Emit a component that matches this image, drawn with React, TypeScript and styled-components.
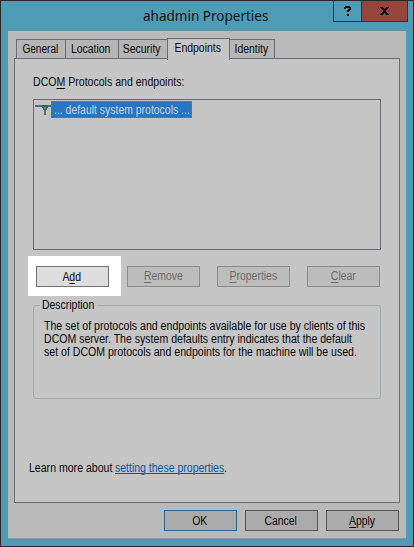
import React from "react";
import styled, { createGlobalStyle } from "styled-components";

const Global = createGlobalStyle`
  *, *::before, *::after { box-sizing: border-box; }
  body { margin: 0; overflow: hidden; background: #4e9bb5; }
`;

const Dialog = styled.main`
  width: 414px;
  height: 547px;
  display: flex;
  flex-direction: column;
  padding: 0 7px 7px;
  background: #4e9bb5;
  border: 1px solid #28282b;
  color: #080808;
  font: 12px/13px "Liberation Sans", Arial, sans-serif;
`;

const TitleBar = styled.header`
  height: 29px;
  flex: none;
  display: grid;
  grid-template-columns: 325px 75px;
  align-items: start;
  margin-right: -3px;
`;

const Title = styled.h1`
  width: max-content;
  margin: 5px 0 0 135px;
  font: 400 14px/20px "Noto Sans", "Open Sans", sans-serif;
  transform: scaleX(0.965);
  transform-origin: left;
  white-space: nowrap;
  color: #0b1418;
`;

const Controls = styled.div`
  display: flex;
  height: 21px;
`;

const Control = styled.button<{ $close?: boolean }>`
  width: ${(p) => (p.$close ? 47 : 28)}px;
  padding: 0;
  display: grid;
  place-items: center;
  background: ${(p) => (p.$close ? "#97463e" : "#4e9bb5")};
  border: solid ${(p) => (p.$close ? "#4b2927" : "#1f3942")};
  border-width: 0 ${(p) => (p.$close ? 1 : 0)}px 1px 1px;
`;

const Client = styled.section`
  flex: 1;
  display: flex;
  flex-direction: column;
  width: 398px;
  padding: 7px 6px 0;
  background: #b9b9b9;
  border-top: 1px solid #6c8e9a;
  border-bottom: 1px solid #8a9ca2;
`;

const Tabs = styled.nav`
  display: flex;
  align-items: flex-end;
  height: 20px;
  padding-left: 2px;
  flex: none;
`;

const Tab = styled.button<{ $w: number; $active?: boolean }>`
  position: relative;
  z-index: ${(p) => (p.$active ? 2 : 0)};
  width: ${(p) => p.$w}px;
  height: ${(p) => (p.$active ? 22 : 19)}px;
  margin: 0 -1px ${(p) => (p.$active ? -2 : 0)}px 0;
  padding: ${(p) => (p.$active ? "0 2px 2px 0" : "1px 2px 0 0")};
  display: flex;
  justify-content: center;
  align-items: center;
  color: inherit;
  font: inherit;
  background: ${(p) => (p.$active ? "#c5c5c5" : "#b5b5b5")};
  border: 1px solid #696a73;
  border-bottom: 0;
`;

const Panel = styled.div`
  width: 386px;
  height: 445px;
  flex: none;
  display: flex;
  flex-direction: column;
  padding: 17px 18px 0;
  background: #c5c5c5;
  border: 1px solid #696a73;
`;

/* Condensed lettering for left-aligned copy. */
const Line = styled.div<{ $x?: number }>`
  width: max-content;
  white-space: nowrap;
  transform: scaleX(${(p) => p.$x ?? 0.88});
  transform-origin: left;
`;

/* Condensed lettering for centred captions. */
const Caption = styled.span<{ $x?: number }>`
  display: block;
  white-space: nowrap;
  transform: scaleX(${(p) => p.$x ?? 0.87});
`;

const Mnemonic = styled.span`
  text-decoration: underline;
  text-underline-offset: 2px;
  text-decoration-thickness: 1px;
  text-decoration-skip-ink: none;
`;

const List = styled.div`
  height: 151px;
  width: 348px;
  margin-top: 10px;
  padding: 1px 0 0 1px;
  border: 1px solid #696a73;
`;

const Entry = styled.div`
  display: flex;
  height: 17px;
`;

const Selected = styled.div`
  width: 141px;
  padding: 2px 0 0 2px;
  color: #c6d5e4;
  background: #2875c0;
  border: 1px dotted #a86a3b;
`;

const Actions = styled.div`
  display: flex;
  align-items: center;
  margin: 6px 0 0 -5px;
  height: 40px;
`;

const Spotlight = styled.div`
  width: 93px;
  height: 40px;
  padding: 10px 8px 0;
  margin-right: 6px;
  background: #fff;
`;

const Button = styled.button<{ $kind?: "light" | "default" }>`
  display: flex;
  justify-content: center;
  align-items: center;
  flex: none;
  width: 73px;
  height: 21px;
  padding: 1px 1px 0 0;
  font: inherit;
  color: #080808;
  background: ${(p) => (p.$kind === "light" ? "#dddddd" : "#aaaaaa")};
  border: 1px solid ${(p) => (p.$kind === "default" ? "#2d638d" : p.$kind === "light" ? "#707070" : "#565656")};

  &:disabled {
    color: #6a6a6a;
    background: #bcbcbc;
    border-color: #8a8a8a;
  }
`;

const Disabled = styled.div`
  display: flex;
  gap: 17px;
`;

const Group = styled.fieldset`
  width: 348px;
  height: 100px;
  margin: 3px 0 0;
  padding: 0 0 0 10px;
  min-width: 0;
  border: 1px solid #a3a9ae;
  border-radius: 3px;
`;

const Legend = styled.legend`
  width: 57px;
  margin-left: -4px;
  padding: 0 0 0 2px;
`;

const Copy = styled.div`
  padding-top: 8px;
`;

const Learn = styled.div`
  display: grid;
  grid-template-columns: 86px 109px auto;
  margin: 63px 0 0 -4px;
`;

const Link = styled.a`
  color: #0756a4;
  text-decoration: underline;
  text-decoration-skip-ink: none;
  text-underline-offset: 1px;
`;

const Footer = styled.footer`
  display: flex;
  justify-content: flex-end;
  gap: 8px;
  margin: 7px 1px 0 0;
`;

export default function App() {
  return (
    <>
      <Global />
      <Dialog>
        <TitleBar>
          <Title>ahadmin Properties</Title>
          <Controls>
            <Control aria-label="Help">
              <svg width="7" height="10" shapeRendering="crispEdges">
                <path d="M1 0h5v1h1v3H6v1H5v1H3V4h1V3h1V2H2v1H0V1h1zM3 8h2v2H3z" fill="#090909" />
              </svg>
            </Control>
            <Control $close aria-label="Close">
              <svg width="9" height="8" shapeRendering="crispEdges">
                <path d="M0 0h3v1h1v1h1V1h1V0h3v1H8v1H7v1H6v2h1v1h1v1h1v1H6V7H5V6H4v1H3v1H0V7h1V6h1V5h1V3H2V2H1V1H0z" fill="#090909" />
              </svg>
            </Control>
          </Controls>
        </TitleBar>
        <Client>
          <Tabs>
            <Tab $w={50}><Caption $x={0.84}>General</Caption></Tab>
            <Tab $w={54}><Caption>Location</Caption></Tab>
            <Tab $w={50}><Caption>Security</Caption></Tab>
            <Tab $w={63} $active><Caption>Endpoints</Caption></Tab>
            <Tab $w={46}><Caption>Identity</Caption></Tab>
          </Tabs>
          <Panel>
            <Line $x={0.88}>DCO<Mnemonic>M</Mnemonic> Protocols and endpoints:</Line>
            <List>
              <Entry>
                <svg width="16" height="17" shapeRendering="crispEdges">
                  <path d="M0 4h16v2H0zM9 9h2v5H9z" fill="#3f6f9e" />
                  <path d="M7 4h6v3h-1v2H8V7H7z" fill="#2f6650" />
                  <path d="M9 6h2v2H9z" fill="#55a050" />
                </svg>
                <Selected><Line $x={0.87}>... default system protocols ...</Line></Selected>
              </Entry>
            </List>
            <Actions>
              <Spotlight>
                <Button $kind="light"><Caption>A<Mnemonic>d</Mnemonic>d</Caption></Button>
              </Spotlight>
              <Disabled>
                <Button disabled><Caption><Mnemonic>R</Mnemonic>emove</Caption></Button>
                <Button disabled><Caption><Mnemonic>P</Mnemonic>roperties</Caption></Button>
                <Button disabled><Caption><Mnemonic>C</Mnemonic>lear</Caption></Button>
              </Disabled>
            </Actions>
            <Group>
              <Legend><Line $x={0.87}>Description</Line></Legend>
              <Copy>
                <Line $x={0.883}>The set of protocols and endpoints available for use by clients of this</Line>
                <Line $x={0.88}>DCOM server. The system defaults entry indicates that the default</Line>
                <Line $x={0.88}>set of DCOM protocols and endpoints for the machine will be used.</Line>
              </Copy>
            </Group>
            <Learn>
              <Line>Learn more about</Line>
              <Line $x={0.875}><Link>setting these properties</Link></Line>
              <Line>.</Line>
            </Learn>
          </Panel>
          <Footer>
            <Button $kind="default"><Caption>OK</Caption></Button>
            <Button><Caption>Cancel</Caption></Button>
            <Button><Caption><Mnemonic>A</Mnemonic>pply</Caption></Button>
          </Footer>
        </Client>
      </Dialog>
    </>
  );
}
